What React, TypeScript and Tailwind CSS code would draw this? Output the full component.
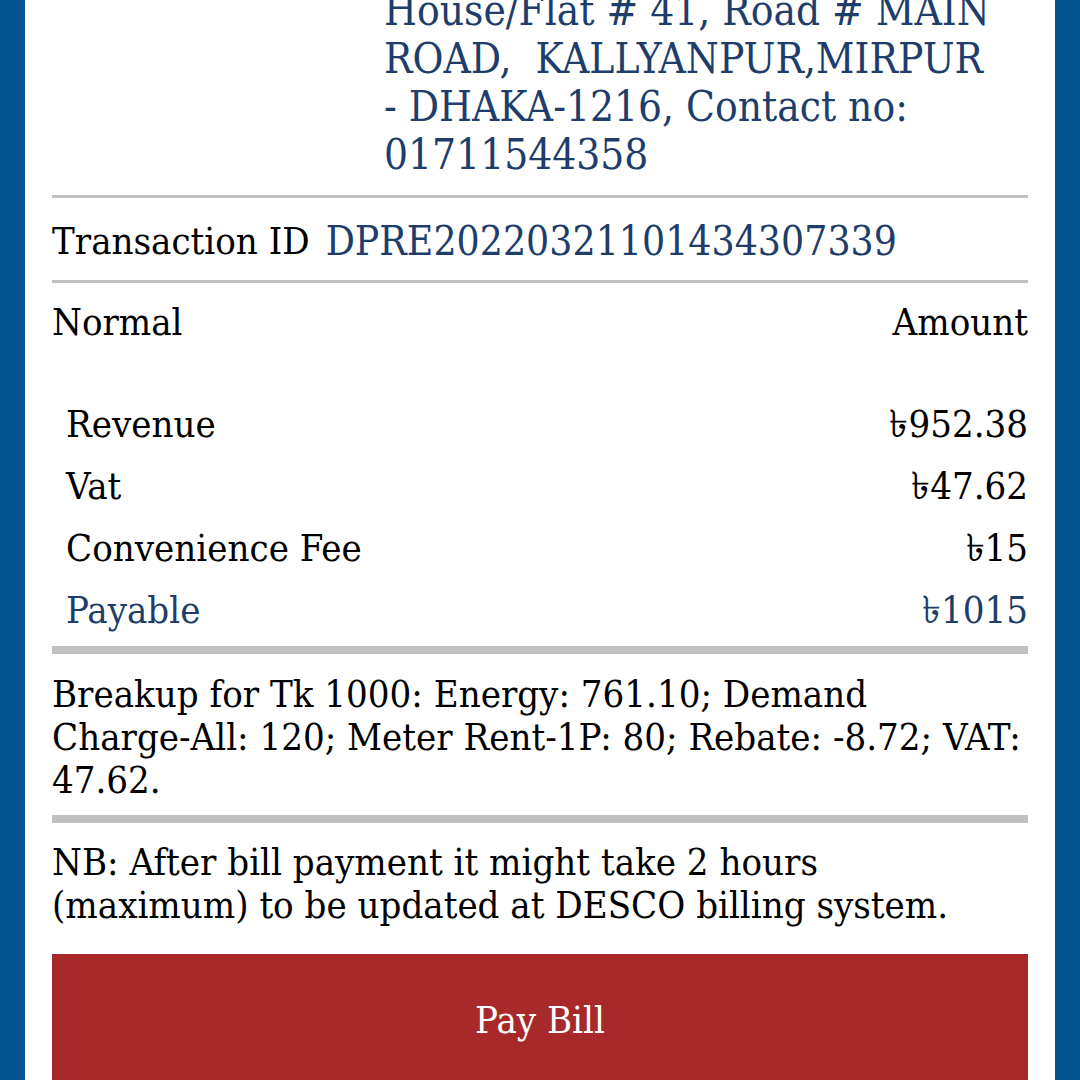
import React from 'react';

const rows = [
  { label: 'Revenue', amount: '৳952.38' },
  { label: 'Vat', amount: '৳47.62' },
  { label: 'Convenience Fee', amount: '৳15' },
];

export default function App() {
  return (
    <div className="h-[1080px] overflow-hidden bg-[#02538f] px-[25px] font-['DejaVu_Serif',serif] font-stretch-condensed text-black">
      <div className="flow-root h-full bg-white px-[27px]">
        {/* address */}
        <div className="-mt-[13px] grid grid-cols-[332px_1fr] pb-[16px]">
          <div />
          <div className="text-[42px] leading-[48px] text-[#1e3d6b]">
            House/Flat # 41, Road # MAIN
            <br />
            ROAD,&nbsp; KALLYANPUR,MIRPUR
            <br />- DHAKA-1216, Contact no:
            <br />
            01711544358
          </div>
        </div>
        <div className="h-[3px] bg-[#c0c0c0]" />

        <div className="flex h-[82px] items-center gap-[16px] pt-[4px] leading-[50px]">
          <span className="text-[38px]">Transaction ID</span>
          <span className="text-[40.5px] text-[#1e3d6b]">DPRE20220321101434307339</span>
        </div>
        <div className="h-[3px] bg-[#c0c0c0]" />

        <div className="flex h-[77px] items-center justify-between text-[38px] leading-[50px]">
          <span>Normal</span>
          <span>Amount</span>
        </div>

        <div className="pt-[33px] pb-[5px] text-[38px] leading-[50px]">
          {rows.map((r) => (
            <div key={r.label} className="flex h-[62px] items-center justify-between pl-[14px]">
              <span>{r.label}</span>
              <span>{r.amount}</span>
            </div>
          ))}
          <div className="flex h-[62px] items-center justify-between pl-[14px] text-[#1e3d6b]">
            <span>Payable</span>
            <span>৳1015</span>
          </div>
        </div>
        <div className="h-[8px] bg-[#c0c0c0]" />

        <p className="pt-[19px] pb-[13px] text-[38px] leading-[43px]">
          Breakup for Tk 1000: Energy: 761.10; Demand
          <br />
          Charge-All: 120; Meter Rent-1P: 80; Rebate: -8.72; VAT:
          <br />
          47.62.
        </p>
        <div className="h-[8px] bg-[#c0c0c0]" />

        <p className="pt-[18px] text-[38px] leading-[43px]">
          NB: After bill payment it might take 2 hours
          <br />
          (maximum) to be updated at DESCO billing system.
        </p>

        <button className="mt-[27px] flex h-[140px] w-full items-start justify-center bg-[#a8292a] pt-[41px] text-[38px] leading-[50px] text-white">
          Pay Bill
        </button>
      </div>
    </div>
  );
}
